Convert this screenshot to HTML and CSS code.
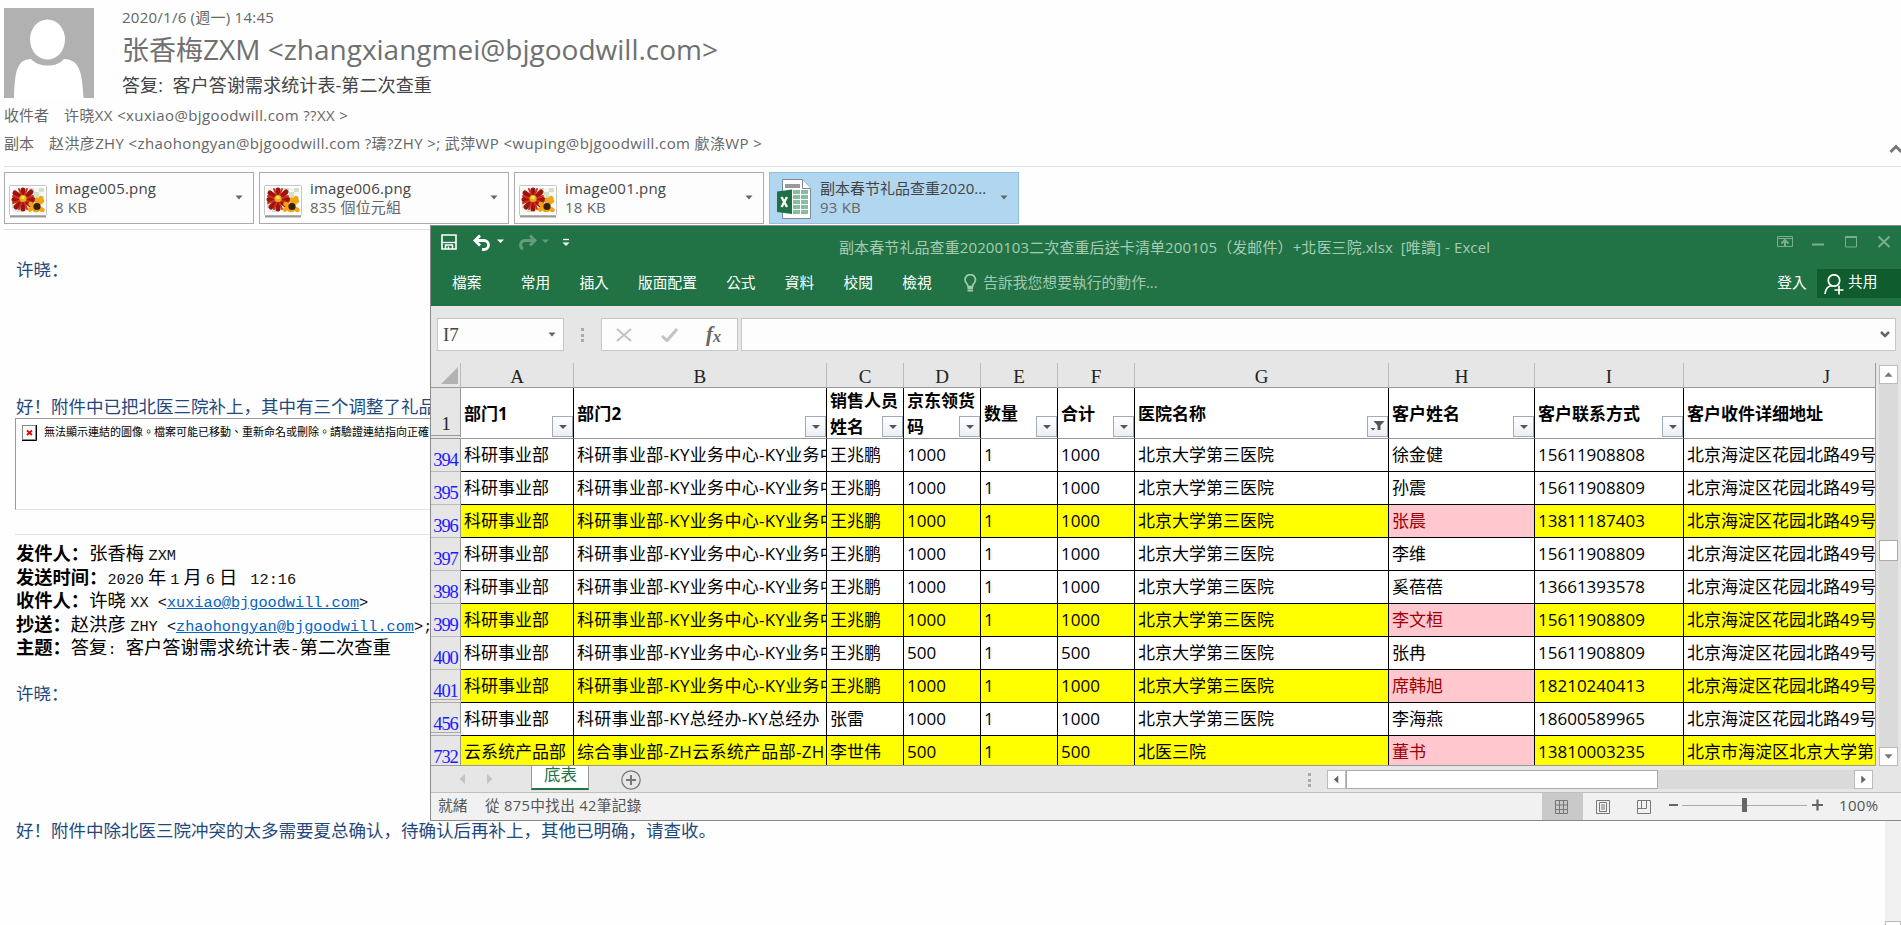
FILE: index.html
```html
<!DOCTYPE html>
<html lang="zh-Hans">
<head>
<meta charset="utf-8">
<title>答复: 客户答谢需求统计表-第二次查重</title>
<link rel="stylesheet" href="styles.css">
</head>
<body>
<svg width="0" height="0" class="defs">
  <defs>
    <symbol id="photo" viewBox="0 0 38 34">
      <rect x="0.5" y="1.5" width="37" height="30" rx="1" fill="#fff" stroke="#c6c6c6"/>
      <path d="M1 32.5h36" stroke="#999" stroke-width="2"/>
      <rect x="3" y="4" width="32" height="24" fill="#f4f7ef"/>
      <path d="M20 4h5v4h-5zM30 4h5v4h-5zM25 8h5v5h-5zM30 13h5v4h-5zM3 20h5v4H3zM8 24h5v4H8z" fill="#d3e0c8"/>
      <g stroke="#9c1410" stroke-width="5" stroke-linecap="round"><path d="M14 6v19M6 9l17 13M5 15.500h19M7 23L22 8"/></g>
      <g stroke="#d32e1c" stroke-width="2" stroke-linecap="round"><path d="M10 5l8 20M18 5l-8 20M4 12l20 7M4 19l20-7"/></g>
      <circle cx="14" cy="14.500" r="3.600" fill="#e0b21c"/><circle cx="14" cy="13.500" r="1.800" fill="#f6e25a"/>
      <g stroke="#f0a416" stroke-width="4.500" stroke-linecap="round"><path d="M28 15.500v10.500M21.500 20l12 6M21 25.500L33 17M32 14l-6 12"/></g>
      <circle cx="28" cy="22.500" r="3.600" fill="#35200c"/>
    </symbol>
    <symbol id="caret" viewBox="0 0 8 5"><path d="M0.500 0.500h7L4 4.500z" fill="currentColor"/></symbol>
    <symbol id="filter" viewBox="0 0 21 21"><rect x="0.500" y="0.500" width="20" height="20" fill="url(#tile2)" stroke="#a3abb5"/><path d="M7 9h8l-4 4z" fill="#555"/></symbol>
    <linearGradient id="tile2" x1="0" y1="0" x2="0" y2="1"><stop offset="0" stop-color="#fff"/><stop offset="1" stop-color="#ebeef5"/></linearGradient>
  </defs>
</svg>

<main class="mail">
  <header class="head">
    <svg class="avatar" viewBox="0 0 90 90"><rect width="90" height="90" fill="#b1b1b1"/><ellipse cx="43.500" cy="31.500" rx="17.500" ry="20" fill="#fff"/><path d="M10 90C11 62 13 52 27 51C34 59.500 53 60 60 51C75 52 78 62 79.500 90z" fill="#fff"/></svg>
    <div class="who">
      <div class="date">2020/1/6 (週一) 14:45</div>
      <div class="from">张香梅<span>ZXM &lt;zhangxiangmei@bjgoodwill.com&gt;</span></div>
      <div class="subject">答复:&nbsp; 客户答谢需求统计表-第二次查重</div>
    </div>
  </header>
  <div class="line to"><span class="lbl3">收件者</span><span>许晓XX &lt;xuxiao@bjgoodwill.com ??XX &gt;</span></div>
  <div class="line cc"><span class="lbl2">副本</span><span>赵洪彦ZHY &lt;zhaohongyan@bjgoodwill.com ?璹?ZHY &gt;; 武萍WP &lt;wuping@bjgoodwill.com 㱆涤WP &gt;</span>
    <svg class="collapse" viewBox="0 0 14 10"><path d="M1.500 8L7 2.500 12.500 8" fill="none" stroke="#777" stroke-width="3"/></svg></div>
  <div class="files">
    <div class="file"><svg class="pic"><use href="#photo"/></svg><div class="fi"><div>image005.png</div><div class="sz">8 KB</div></div><svg class="car"><use href="#caret"/></svg></div>
    <div class="file"><svg class="pic"><use href="#photo"/></svg><div class="fi"><div>image006.png</div><div class="sz">835 個位元組</div></div><svg class="car"><use href="#caret"/></svg></div>
    <div class="file"><svg class="pic"><use href="#photo"/></svg><div class="fi"><div>image001.png</div><div class="sz">18 KB</div></div><svg class="car"><use href="#caret"/></svg></div>
    <div class="file sel"><svg class="xl" viewBox="0 0 34 40"><path d="M5.500 0.500h20l8 9v30h-28z" fill="#fff" stroke="#7b8a99"/><path d="M25.500 0.500v9h8" fill="#fff" stroke="#7b8a99"/><path d="M8 5h15v4H8z" fill="#999"/><g fill="#86bf9f"><path d="M16 11h7v4h-7zM24 11h7v4h-7zM16 16h7v4h-7zM24 16h7v4h-7zM16 21h7v4h-7zM24 21h7v4h-7zM16 26h7v4h-7zM24 26h7v4h-7zM16 31h7v4h-7zM24 31h7v4h-7z"/></g><path d="M0 12.500L15 10.500V35L0 33z" fill="#1e7145"/><path d="M4.500 18l5.500 10M10 18L4.500 28" stroke="#fff" stroke-width="2.400"/></svg><div class="fi"><div class="fn">副本春节礼品查重2020...</div><div class="sz">93 KB</div></div><svg class="car"><use href="#caret"/></svg></div>
  </div>
  <article class="body">
    <p class="p1">许晓：</p>
    <p class="p2">好！附件中已把北医三院补上，其中有三个调整了礼品</p>
    <div class="broken" lang="zh-Hant"><svg width="15" height="16" viewBox="0 0 15 16"><rect x="0.500" y="0.500" width="13" height="14" fill="#fff" stroke="#888"/><path d="M0 15.500h14.500V0" fill="none" stroke="#000"/><path d="M5 5.500l5 4.500M10 5.500L5 10" stroke="#e00" stroke-width="1.800"/></svg><span>無法顯示連結的圖像。檔案可能已移動、重新命名或刪除。請驗證連結指向正確</span></div>
    <div class="quote">
      <div class="q"><b>发件人：</b>张香梅<i class="g">ZXM</i></div>
      <div class="q d"><b>发送时间：</b><i>2020</i><span>年</span><i>1</i><span>月</span><i>6</i><span>日</span><i> 12:16</i></div>
      <div class="q"><b>收件人：</b>许晓<i class="g">XX &lt;<a>xuxiao@bjgoodwill.com</a>&gt;</i></div>
      <div class="q"><b>抄送：</b>赵洪彦<i class="g">ZHY &lt;<a>zhaohongyan@bjgoodwill.com</a>&gt;;</i></div>
      <div class="q"><b>主题：</b>答复<i>: </i>客户答谢需求统计表<i>-</i>第二次查重</div>
    </div>
    <p class="p3">许晓：</p>
    <p class="p4">好！附件中除北医三院冲突的太多需要夏总确认，待确认后再补上，其他已明确，请查收。</p>
  </article>
</main>
<div class="mailbar"><div class="mailbtn"></div></div>

<section class="excel">
  <div class="title">
    <svg class="qat" viewBox="0 0 140 20">
      <path d="M1 1h14v14H1z" fill="none" stroke="#fff" stroke-width="1.600"/><path d="M1 8.500h14" stroke="#fff" stroke-width="1.300"/><path d="M4.500 15v-4h7V15M7.500 15v-2.500" fill="none" stroke="#fff" stroke-width="1.500"/>
      <path d="M39 1.500L34 6.500l5 5M34.500 6.500h8.500a4.500 4.500 0 0 1 0 9h-2" fill="none" stroke="#fff" stroke-width="2.800"/>
      <path d="M56 5.500h7l-3.500 3.500z" fill="#fff"/>
      <g opacity=".3"><path d="M89 1.500l5 5-5 5M93.500 6.500H84a4.500 4.500 0 0 0-2 8.500" fill="none" stroke="#fff" stroke-width="2.800"/><path d="M101 5.500h7l-3.500 3.500z" fill="#fff"/></g>
      <path d="M122 5.500h6" stroke="#fff" stroke-width="1.300"/><path d="M121.500 8.500h7L125 12z" fill="#fff"/>
    </svg>
    <span class="name" lang="zh-Hant">副本春节礼品查重20200103二次查重后送卡清单200105（发邮件）+北医三院.xlsx&nbsp; [唯讀] - Excel</span>
    <svg class="wins" viewBox="0 0 114 14"><g fill="none" stroke="#7aae8d"><path d="M0.500 1.500h15v10H0.500zM0.500 3.500h15" stroke-width="1"/><path d="M8 11V5.500M4.500 8.500L8 5l3.500 3.500" stroke-width="2"/><path d="M35 9.500h12" stroke-width="2"/><path d="M68.500 1.500h11v10.500h-11z"/><path d="M68.500 2h11" stroke-width="2"/><path d="M101.500 1.500l11 10.500M112.500 1.500l-11 10.500" stroke-width="2"/></g></svg>
  </div>
  <nav class="tabs" lang="zh-Hant">
    <span class="t0">檔案</span><span class="t1">常用</span><span>插入</span><span>版面配置</span><span>公式</span><span>資料</span><span>校閱</span><span>檢視</span>
    <svg class="bulb" viewBox="0 0 13 18"><path d="M4 12.500C4 9.500 1 9 1 5.800a5.200 5.200 0 0 1 10.500 0C11.500 9 8.500 9.500 8.500 12.500z" fill="none" stroke="#a3c9b1" stroke-width="1.700"/><path d="M3.500 14h5.500M3.500 16.500h5.500" stroke="#a3c9b1" stroke-width="2"/></svg>
    <span class="tell">告訴我您想要執行的動作...</span>
    <span class="login">登入</span>
    <span class="share"><svg width="20" height="21" viewBox="0 0 20 21"><circle cx="10" cy="6.500" r="5.700" fill="none" stroke="#fff" stroke-width="1.700"/><path d="M1 20c.5-5 3-8 7-8.500M10.500 16h9M15 11.500v9" fill="none" stroke="#fff" stroke-width="1.700"/></svg>共用</span>
  </nav>
  <div class="fbar">
    <div class="box nm"><span>I7</span><svg class="car"><use href="#caret"/></svg></div>
    <div class="dots"><u></u><u></u><u></u></div>
    <div class="box fx"><svg viewBox="0 0 16 14" width="16" height="14"><path d="M1 1l14 12M15 1L1 13" stroke="#c3c3c3" stroke-width="2.200"/></svg><svg viewBox="0 0 17 14" width="17" height="14"><path d="M1 8l5 4.500L16 1" fill="none" stroke="#c3c3c3" stroke-width="3"/></svg><em>f<sub>x</sub></em></div>
    <div class="box in"><svg viewBox="0 0 10 7" width="10" height="7"><path d="M1 1l4 4 4-4" fill="none" stroke="#666" stroke-width="2.500"/></svg></div>
  </div>
  <div class="sheet">
    <div class="grid">
      <div class="row cols"><div class="n"><svg width="17" height="17"><path d="M17 0v17H0z" fill="#b2b2b2"/></svg></div><div>A</div><div>B</div><div>C</div><div>D</div><div>E</div><div>F</div><div>G</div><div>H</div><div>I</div><div class="j">J</div></div>
      <div class="row hd"><div class="n">1</div><div>部门1<svg class="fl"><use href="#filter"/></svg></div><div>部门2<svg class="fl"><use href="#filter"/></svg></div><div>销售人员<br>姓名<svg class="fl"><use href="#filter"/></svg></div><div>京东领货<br>码<svg class="fl"><use href="#filter"/></svg></div><div>数量<svg class="fl"><use href="#filter"/></svg></div><div>合计<svg class="fl"><use href="#filter"/></svg></div><div>医院名称<svg class="fl" viewBox="0 0 21 21"><rect x="0.500" y="0.500" width="20" height="20" fill="url(#tile2)" stroke="#a3abb5"/><path d="M6.500 5h11l-4 4.500V14h-3V9.500z" fill="#555"/><path d="M3.500 12h5L6 14.500z" fill="#555"/></svg></div><div>客户姓名<svg class="fl"><use href="#filter"/></svg></div><div>客户联系方式<svg class="fl"><use href="#filter"/></svg></div><div>客户收件详细地址</div></div>
      <div class="row"><div class="n">394</div><div>科研事业部</div><div>科研事业部-KY业务中心-KY业务中</div><div>王兆鹏</div><div>1000</div><div>1</div><div>1000</div><div>北京大学第三医院</div><div>徐金健</div><div>15611908808</div><div>北京海淀区花园北路49号</div></div>
      <div class="row"><div class="n">395</div><div>科研事业部</div><div>科研事业部-KY业务中心-KY业务中</div><div>王兆鹏</div><div>1000</div><div>1</div><div>1000</div><div>北京大学第三医院</div><div>孙震</div><div>15611908809</div><div>北京海淀区花园北路49号</div></div>
      <div class="row y"><div class="n">396</div><div>科研事业部</div><div>科研事业部-KY业务中心-KY业务中</div><div>王兆鹏</div><div>1000</div><div>1</div><div>1000</div><div>北京大学第三医院</div><div class="r">张晨</div><div>13811187403</div><div>北京海淀区花园北路49号</div></div>
      <div class="row"><div class="n">397</div><div>科研事业部</div><div>科研事业部-KY业务中心-KY业务中</div><div>王兆鹏</div><div>1000</div><div>1</div><div>1000</div><div>北京大学第三医院</div><div>李维</div><div>15611908809</div><div>北京海淀区花园北路49号</div></div>
      <div class="row"><div class="n">398</div><div>科研事业部</div><div>科研事业部-KY业务中心-KY业务中</div><div>王兆鹏</div><div>1000</div><div>1</div><div>1000</div><div>北京大学第三医院</div><div>奚蓓蓓</div><div>13661393578</div><div>北京海淀区花园北路49号</div></div>
      <div class="row y"><div class="n">399</div><div>科研事业部</div><div>科研事业部-KY业务中心-KY业务中</div><div>王兆鹏</div><div>1000</div><div>1</div><div>1000</div><div>北京大学第三医院</div><div class="r">李文桓</div><div>15611908809</div><div>北京海淀区花园北路49号</div></div>
      <div class="row"><div class="n">400</div><div>科研事业部</div><div>科研事业部-KY业务中心-KY业务中</div><div>王兆鹏</div><div>500</div><div>1</div><div>500</div><div>北京大学第三医院</div><div>张冉</div><div>15611908809</div><div>北京海淀区花园北路49号</div></div>
      <div class="row y"><div class="n gap">401</div><div>科研事业部</div><div>科研事业部-KY业务中心-KY业务中</div><div>王兆鹏</div><div>1000</div><div>1</div><div>1000</div><div>北京大学第三医院</div><div class="r">席韩旭</div><div>18210240413</div><div>北京海淀区花园北路49号</div></div>
      <div class="row"><div class="n gap">456</div><div>科研事业部</div><div>科研事业部-KY总经办-KY总经办</div><div>张雷</div><div>1000</div><div>1</div><div>1000</div><div>北京大学第三医院</div><div>李海燕</div><div>18600589965</div><div>北京海淀区花园北路49号</div></div>
      <div class="row y last"><div class="n">732</div><div>云系统产品部</div><div>综合事业部-ZH云系统产品部-ZH</div><div>李世伟</div><div>500</div><div>1</div><div>500</div><div>北医三院</div><div class="r">董书</div><div>13810003235</div><div>北京市海淀区北京大学第三</div></div>
    </div>
    <div class="vbar"><svg class="sb" viewBox="0 0 19 19"><path d="M5 12h9L9.500 7z" fill="#777"/></svg><div class="vthumb"></div><svg class="sb" viewBox="0 0 19 19"><path d="M5 7h9l-4.500 5z" fill="#777"/></svg></div>
  </div>
  <div class="strip">
    <svg class="nav" viewBox="0 0 34 10"><path d="M6 0v10L0.500 5zM28 0v10l5.500-5z" fill="#c3c3c3"/></svg>
    <span class="tab">底表</span>
    <svg class="add" viewBox="0 0 20 20"><circle cx="10" cy="10" r="9.200" fill="none" stroke="#777" stroke-width="1.200"/><path d="M10 5v10M5 10h10" stroke="#777" stroke-width="2"/></svg>
    <div class="dots sd"><u></u><u></u><u></u></div>
    <div class="hbar"><svg class="sb" viewBox="0 0 19 19"><path d="M11.500 5v9l-5-4.500z" fill="#666"/></svg><div class="hthumb"></div><svg class="sb" viewBox="0 0 19 19"><path d="M7 5v9l5-4.500z" fill="#666"/></svg></div>
  </div>
  <footer class="status" lang="zh-Hant">
    <span class="s1">就緒</span><span class="s2">從 875中找出 42筆記錄</span>
    <div class="views">
      <span class="v on"><svg width="13" height="14" viewBox="0 0 13 14"><path d="M.5.500h12v13H.5zM4.500.500v13M8.500.500v13M.5 5h12M.5 9.500h12" fill="none" stroke="#777"/></svg></span>
      <span class="v"><svg width="14" height="14" viewBox="0 0 14 14"><path d="M.5.500h13v13H.5zM3.500 2.500h7v9h-7zM5 5h4M5 7h4M5 9h4" fill="none" stroke="#777"/></svg></span>
      <span class="v"><svg width="14" height="14" viewBox="0 0 14 14"><path d="M.5.500h13v13H.5zM4.500.500v8M9.500.500v8M.5 8.500h9" fill="none" stroke="#777"/></svg></span>
    </div>
    <svg class="zoom" viewBox="0 0 155 14"><path d="M0 7h9M143 7h11M148.500 1.500v11" stroke="#666" stroke-width="2.200"/><path d="M13 7.500h125" stroke="#aaa"/><path d="M73 0h5v14h-5z" fill="#666"/></svg>
    <span class="pct">100%</span>
  </footer>
</section>
</body>
</html>
```
FILE: styles.css
```css
* { box-sizing: border-box; }
body { margin: 0; width: 1901px; height: 925px; overflow: hidden; position: relative; background: #fefefe; font-family: "Open Sans", "Noto Sans CJK SC", sans-serif; color: #555; }
.defs { position: absolute; }
svg { display: block; flex: none; }
i { font-style: normal; }
.mail { display: flex; flex-direction: column; white-space: nowrap; }

/* message header */
.head { display: flex; height: 98px; padding: 8px 0 0 4px; }
.avatar { width: 90px; height: 90px; }
.who { margin-left: 28px; }
.date { font-size: 15px; line-height: 18px; letter-spacing: .25px; color: #666; }
.from { font-size: 27px; line-height: 36px; margin-top: 6px; color: #707070; }
.from span { font-size: 28px; line-height: 30px; }
.subject { font-size: 18px; line-height: 26px; margin-top: 4px; color: #444; letter-spacing: .1px; }
.line { display: flex; font-size: 15px; line-height: 28px; padding-left: 4px; color: #666; letter-spacing: .38px; }
.to { margin-top: 3px; }
.cc { height: 37px; align-items: flex-start; }
.lbl3 { width: 60px; letter-spacing: 0; }
.lbl2 { width: 45px; letter-spacing: 0; }
.collapse { width: 14px; height: 10px; margin: 15px -2px 0 auto; }

/* attachments */
.files { display: flex; gap: 5px; margin-left: 4px; padding: 5px 0; height: 64px; border-top: 1px solid #e0e0e0; border-bottom: 1px solid #e0e0e0; }
.file { display: flex; width: 250px; height: 52px; border: 1px solid #ababab; background: #fdfdfd; font-size: 15px; line-height: 19px; color: #444; letter-spacing: .2px; }
.sel { background: #b1d6f0; border-color: #92c0e0; }
.pic { width: 38px; height: 34px; margin: 11px 0 0 4px; }
.xl { width: 34px; height: 40px; margin: 6px 0 0 7px; }
.fi { margin: 6px 0 0 8px; width: 180px; }
.sel .fi { margin-left: 9px; }
.fn { letter-spacing: 0; }
.sz { color: #666; }
.car { width: 8px; height: 5px; margin-top: 22px; color: #666; }

/* message body */
.body { padding-left: 16px; font-family: "Noto Sans CJK SC", sans-serif; font-size: 17.500px; color: #1f497d; }
.body p { margin: 0; line-height: 24px; }
.p1 { padding-top: 27px; }
.body .p2 { margin-top: 113px; }
.broken { display: flex; gap: 7px; width: 500px; height: 92px; margin: 0 0 0 -1px; padding: 6px 0 0 6px; border: 1px solid #e4e4e4; border-top-color: #999; border-left-color: #999; font-family: "Noto Sans CJK TC", sans-serif; font-size: 11px; line-height: 12px; color: #000; }
.quote { margin: 24px 0 0 -1px; padding: 5px 0 0 1px; border-top: 1px solid #e1e1e1; color: #000; font-size: 18.300px; }
.q { height: 23.600px; line-height: 24px; }
.q i { font-family: "Liberation Mono", monospace; font-size: 15.250px; white-space: pre; color: #111; }
.q .g { margin-left: 4.600px; }
.d span { margin: 0 4px; }
.q a { color: #0563c1; text-decoration: underline; }
.body .p3 { margin-top: 23px; }
.body .p4 { margin-top: 113px; }
.mailbar { position: absolute; right: 0; top: 821px; width: 16px; height: 104px; background: #f0f0f0; display: flex; align-items: flex-end; }
.mailbtn { width: 16px; height: 4px; background: #fff; border: 1px solid #bbb; border-bottom: 0; }

/* spreadsheet window */
.excel { position: absolute; left: 430px; top: 225px; width: 1471px; height: 596px; background: #e6e6e6; border: 1px solid #8a8a8a; border-right: 0; display: flex; flex-direction: column; white-space: nowrap; font-family: "Open Sans", "Noto Sans CJK TC", sans-serif; }
.title { display: flex; height: 38px; background: #217346; color: #a6ccb4; font-size: 15px; }
.qat { width: 140px; height: 20px; margin: 8px 0 0 10px; }
.name { margin-left: 258px; line-height: 42px; width: 652px; letter-spacing: .1px; }
.wins { width: 114px; height: 14px; margin: 9px 0 0 286px; }
.tabs { display: flex; height: 42px; align-items: flex-start; line-height: 36px; background: #217346; color: #fff; font-size: 14.700px; padding-left: 21px; gap: 29.300px; }
.t1 { margin-left: 10px; }
.bulb { width: 13px; height: 18px; margin: 10px 0 0 3px; }
.tell { margin-left: -23px; font-size: 14.800px; color: #a3c9b1; }
.login { margin-left: auto; }
.share { display: flex; gap: 4px; width: 84px; height: 29px; line-height: 25px; margin: 5px 0 0 -19px; padding-left: 7px; background: #0f5c2f; }
.share svg { margin-top: 5px; }
.fbar { display: flex; height: 57px; padding: 12px 5px 0 6px; }
.box { height: 33px; background: #fdfdfd; border: 1px solid #c6c6c6; display: flex; align-items: center; }
.nm { width: 127px; padding: 0 7px 0 5px; justify-content: space-between; font-family: "Liberation Serif", serif; font-size: 19px; color: #444; }
.nm .car { margin: 0; }
.dots { width: 3px; height: 14px; margin: 10px 0 0 17px; display: flex; flex-direction: column; justify-content: space-between; }
.dots u { width: 3px; height: 3px; background: #aaa; }
.fx { width: 137px; margin-left: 17px; padding: 0 16px 0 14px; justify-content: space-between; }
.fx em { font: italic 700 21px/30px "Liberation Serif", serif; color: #666; height: 32px; }
.fx sub { font-size: 16px; vertical-align: -1px; line-height: 1px; }
.in { flex: 1; margin-left: 3px; justify-content: flex-end; padding-right: 5px; }

/* grid */
.sheet { display: flex; height: 403px; }
.grid { width: 1445px; height: 403px; overflow: hidden; border-right: 1px solid #999; border-bottom: 1px solid #999; }
.row { display: grid; grid-template-columns: 30px 113px 253px 77px 77px 77px 77px 254px 146px 149px 191px; height: 33px; background: #fff; font-family: "Open Sans", "Noto Sans CJK SC", sans-serif; font-size: 17px; line-height: 31px; color: #000; }
.row > div { border-right: 1px solid #000; border-bottom: 1px solid #000; padding-left: 3px; overflow: hidden; position: relative; }
.row > div:nth-child(3) { letter-spacing: .3px; }
.row > div:last-child { border-right: 0; }
.row > .n { background: #e6e6e6; border-right-color: #999; border-bottom-color: #bbb; color: #1a1aff; font-family: "Liberation Serif", serif; font-size: 18.500px; letter-spacing: -1.100px; line-height: 42px; padding: 0; text-align: center; }
.row > .gap { border-bottom: 4px double #aaa; }
.row.y { background: #ff0; }
.row > .r { background: #ffc7ce; color: #9c0006; }
.row.cols, .cols > .n { background: #e6e6e6; }
.row.cols { height: 25px; }
.row.cols > div { border-color: #999; border-right-color: #bbb; font-family: "Liberation Serif", serif; font-size: 19px; line-height: 28px; text-align: center; padding: 0; color: #222; }
.row.cols > .n { padding: 4px 0 0 10px; }
.row.cols > .j { padding-left: 94px; }
.row.hd { height: 51px; font-weight: 700; line-height: 26px; }
.row.hd > div { display: flex; align-items: center; border-bottom-color: #999; padding-top: 1px; }
.row.hd > .n { align-items: flex-end; justify-content: center; color: #222; font-weight: 400; line-height: 22px; padding: 0; border-bottom: 4px double #999; }
.fl { position: absolute; right: 0; bottom: 1px; width: 21px; height: 21px; }
.vbar { display: flex; flex-direction: column; justify-content: space-between; width: 19px; height: 401px; margin: 2px 0 0 3px; background: #dadada; }
.sb { width: 19px; height: 19px; background: #fff; border: 1px solid #bbb; }
.vthumb { width: 19px; height: 21px; margin-top: -31px; background: #fff; border: 1px solid #aaa; }

/* sheet tabs and horizontal scrolling */
.strip { display: flex; height: 27px; border-bottom: 1px solid #c0c0c0; }
.nav { width: 34px; height: 10px; margin: 8px 0 0 28px; }
.tab { width: 58px; height: 24px; margin: 0 0 0 38px; padding-left: 12px; background: #fff; border-right: 1px solid #999; border-left: 1px solid #999; border-bottom: 2px solid #217346; color: #217346; font-size: 16.500px; line-height: 17px; }
.add { width: 20px; height: 20px; margin: 4px 0 0 32px; }
.sd { margin: 7px 0 0 667px; }
.hbar { display: flex; width: 546px; height: 19px; margin: 4px 0 0 16px; background: #dadada; }
.hthumb { width: 312px; height: 19px; margin-right: auto; background: #fff; border: 1px solid #aaa; }
.status { display: flex; height: 27px; background: #f1f1f1; font-size: 14.700px; line-height: 25px; color: #555; }
.s1 { margin-left: 7px; width: 47px; }
.s2 { width: 180px; letter-spacing: .3px; }
.views { display: flex; margin-left: 877px; }
.v { width: 41px; display: flex; align-items: center; justify-content: center; padding-right: 2px; }
.on { background: #c9c9c9; }
.zoom { width: 155px; height: 14px; margin: 5px 0 0 4px; }
.pct { margin-left: 15px; font-size: 15px; letter-spacing: .3px; }
```
